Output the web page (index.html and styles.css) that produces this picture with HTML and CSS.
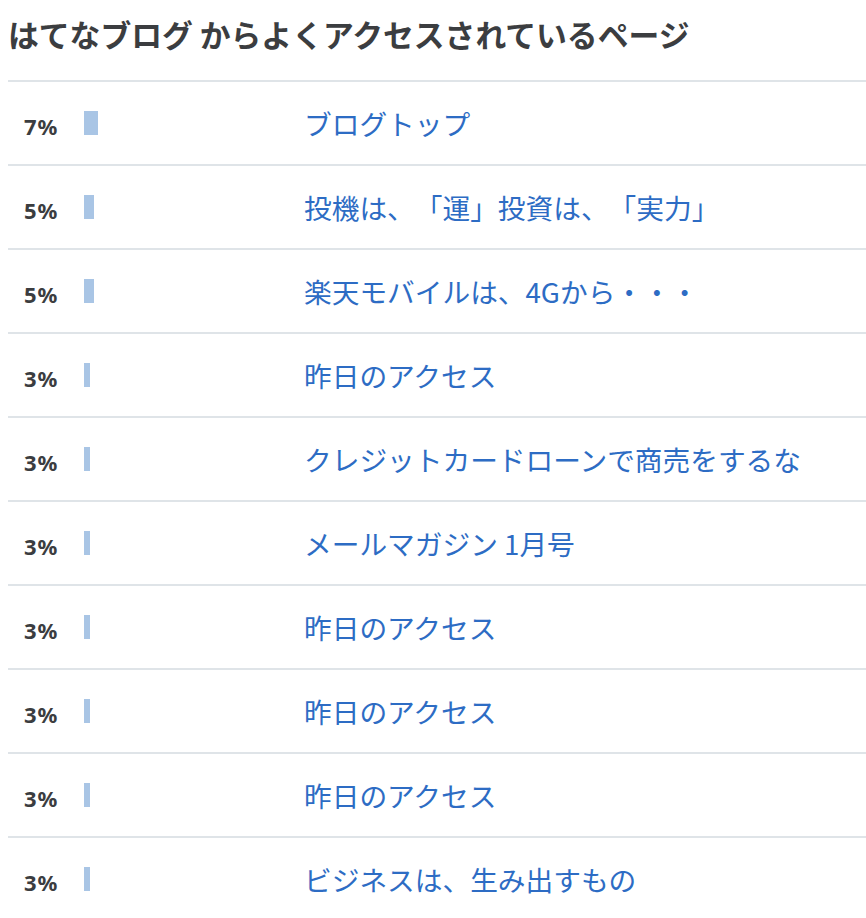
FILE: index.html
```html
<!DOCTYPE html>
<html lang="ja">
<head>
<meta charset="utf-8">
<title>はてなブログ からよくアクセスされているページ</title>
<link rel="stylesheet" href="styles.css">
</head>
<body>
<div class="wrap">
  <h2 class="title">はてなブログ からよくアクセスされているページ</h2>
  <ul class="list">
    <li class="row"><span class="pct">7%</span><span class="barcell"><span class="bar" style="width:14px"></span></span><a class="link" href="#">ブログトップ</a></li>
    <li class="row"><span class="pct">5%</span><span class="barcell"><span class="bar" style="width:10px"></span></span><a class="link" href="#">投機は、「運」投資は、「実力」</a></li>
    <li class="row"><span class="pct">5%</span><span class="barcell"><span class="bar" style="width:10px"></span></span><a class="link" href="#">楽天モバイルは、4Gから・・・</a></li>
    <li class="row"><span class="pct">3%</span><span class="barcell"><span class="bar" style="width:6px"></span></span><a class="link" href="#">昨日のアクセス</a></li>
    <li class="row"><span class="pct">3%</span><span class="barcell"><span class="bar" style="width:6px"></span></span><a class="link" href="#">クレジットカードローンで商売をするな</a></li>
    <li class="row"><span class="pct">3%</span><span class="barcell"><span class="bar" style="width:6px"></span></span><a class="link" href="#">メールマガジン 1月号</a></li>
    <li class="row"><span class="pct">3%</span><span class="barcell"><span class="bar" style="width:6px"></span></span><a class="link" href="#">昨日のアクセス</a></li>
    <li class="row"><span class="pct">3%</span><span class="barcell"><span class="bar" style="width:6px"></span></span><a class="link" href="#">昨日のアクセス</a></li>
    <li class="row"><span class="pct">3%</span><span class="barcell"><span class="bar" style="width:6px"></span></span><a class="link" href="#">昨日のアクセス</a></li>
    <li class="row"><span class="pct">3%</span><span class="barcell"><span class="bar" style="width:6px"></span></span><a class="link" href="#">ビジネスは、生み出すもの</a></li>
  </ul>
</div>
</body>
</html>
```
FILE: styles.css
```css
html, body {
  margin: 0;
  padding: 0;
  background: #ffffff;
}
body {
  font-family: "Noto Sans CJK JP", "Noto Sans", sans-serif;
  color: #3b3d40;
  text-spacing-trim: space-all;
  font-feature-settings: "chws" 0, "halt" 0, "palt" 0;
}
.wrap {
  padding-left: 8px;
}
.title {
  margin: 0;
  padding-top: 11px;
  padding-bottom: 24px;
  font-size: 30.8px;
  line-height: 45px;
  font-weight: 700;
  color: #3b3d40;
  white-space: nowrap;
}
.list {
  list-style: none;
  margin: 0;
  padding: 0;
}
.row {
  display: grid;
  grid-template-columns: 60px 220px 1fr;
  align-items: center;
  height: 84px;
  box-sizing: border-box;
  border-top: 2px solid #dfe4e8;
  padding-left: 16px;
}
.pct {
  font-family: "Noto Sans", "Liberation Sans", sans-serif;
  font-weight: 700;
  font-size: 22px;
  letter-spacing: 1px;
  color: #3b3d40;
  padding-top: 6px;
}
.barcell {
  display: flex;
  align-items: center;
}
.bar {
  display: block;
  height: 24px;
  background: #a9c5e5;
}
.link {
  font-size: 27.7px;
  line-height: 40px;
  color: #2d6cc4;
  text-decoration: none;
  white-space: nowrap;
}
```
